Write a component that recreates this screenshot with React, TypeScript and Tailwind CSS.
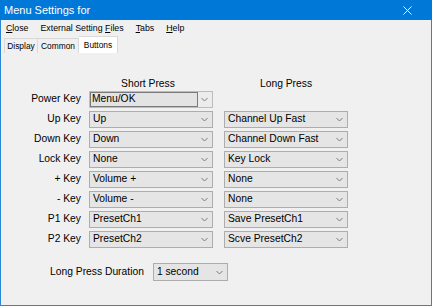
import React from "react";

const font = { fontFamily: '"Liberation Sans", Arial, sans-serif' };

function Chevron() {
  return (
    <svg width="7" height="5" viewBox="0 0 7 5" className="shrink-0">
      <path d="M0.5 1 L3.5 4 L6.5 1" fill="none" stroke="#7a7a7a" strokeWidth="1" />
    </svg>
  );
}

function Combo({ value, w = "w-[124px]", h = "h-[17px]" }: { value: string; w?: string; h?: string }) {
  return (
    <div className={`${w} ${h} border border-[#adadad] bg-[#e5e5e5] flex items-center pl-[3px] pr-[4px]`}>
      <span className="flex-1 text-[10.3px] leading-none text-black whitespace-nowrap">{value}</span>
      <Chevron />
    </div>
  );
}

function EditCombo({ value }: { value: string }) {
  return (
    <div className="w-[124px] h-[17px] border border-[#bcbcbc] bg-[#ececec] flex items-stretch">
      <div className="w-[108px] border border-[#7a7a7a] bg-[#e3e3e3] flex items-center pl-[1px]">
        <span className="text-[10.3px] leading-none text-black whitespace-nowrap">{value}</span>
      </div>
      <div className="flex-1 flex items-center justify-end pr-[4px]">
        <Chevron />
      </div>
    </div>
  );
}

const rows: [string, string, string | null][] = [
  ["Power Key", "Menu/OK", null],
  ["Up Key", "Up", "Channel Up Fast"],
  ["Down Key", "Down", "Channel Down Fast"],
  ["Lock Key", "None", "Key Lock"],
  ["+ Key", "Volume +", "None"],
  ["- Key", "Volume -", "None"],
  ["P1 Key", "PresetCh1", "Save PresetCh1"],
  ["P2 Key", "PresetCh2", "Scve PresetCh2"],
];

function U({ c }: { c: string }) {
  return <span className="underline underline-offset-[1px]">{c}</span>;
}

export default function App() {
  return (
    <div className="w-[432px] h-[306px] flex flex-col bg-[#f0f0f0] text-black overflow-hidden" style={font}>
      {/* Title bar */}
      <div className="h-[20px] bg-[#0078d7] flex items-center pl-[4px] pr-[20px] text-white shrink-0">
        <span className="flex-1 text-[11px] leading-none">Menu Settings for</span>
        <svg width="9" height="9" viewBox="0 0 9 9">
          <path d="M0.5 0.5 L8.5 8.5 M8.5 0.5 L0.5 8.5" stroke="#ffffff" strokeWidth="1" />
        </svg>
      </div>
      <div className="flex-1 flex flex-col border-x border-b border-[#2b87d6]">
        {/* Menu bar */}
        <div className="h-[17px] flex items-center gap-[12px] pl-[5px] text-[8.8px] leading-none">
          <span><U c="C" />lose</span>
          <span>External Setting <U c="F" />iles</span>
          <span><U c="T" />abs</span>
          <span><U c="H" />elp</span>
        </div>
        {/* Tabs */}
        <div className="h-[16px] flex items-end pl-[3px] text-[8.4px] leading-none">
          <div className="w-[34px] h-[15px] border border-b-0 border-[#d9d9d9] flex items-center justify-center">Display</div>
          <div className="w-[41px] h-[15px] border border-b-0 border-l-0 border-[#d9d9d9] flex items-center justify-center">Common</div>
          <div className="w-[39px] h-[17px] border border-b-0 border-l-0 border-[#d9d9d9] bg-white flex items-center justify-center">Buttons</div>
        </div>
        {/* Content */}
        <div className="flex flex-col pt-[25px]">
          <div className="h-[13px] flex items-center text-[10.3px] leading-none">
            <div className="w-[80px]" />
            <div className="ml-[8px] w-[124px] text-center pr-[6px]">Short Press</div>
            <div className="ml-[11px] w-[124px] text-center">Long Press</div>
          </div>
          <div className="flex flex-col gap-[3px]">
            {rows.map(([label, s, l]) => (
              <div key={label} className="h-[17px] flex items-center">
                <div className="w-[80px] text-right text-[10.3px] leading-none">{label}</div>
                <div className="ml-[8px]">
                  {l === null ? <EditCombo value={s} /> : <Combo value={s} />}
                </div>
                {l !== null && (
                  <div className="ml-[11px]">
                    <Combo value={l} />
                  </div>
                )}
              </div>
            ))}
          </div>
          <div className="mt-[15px] h-[18px] flex items-center">
            <div className="w-[49px]" />
            <span className="text-[10.3px] leading-none">Long Press Duration</span>
            <div className="ml-[9px]">
              <Combo value="1 second" w="w-[75px]" h="h-[18px]" />
            </div>
          </div>
        </div>
      </div>
    </div>
  );
}
